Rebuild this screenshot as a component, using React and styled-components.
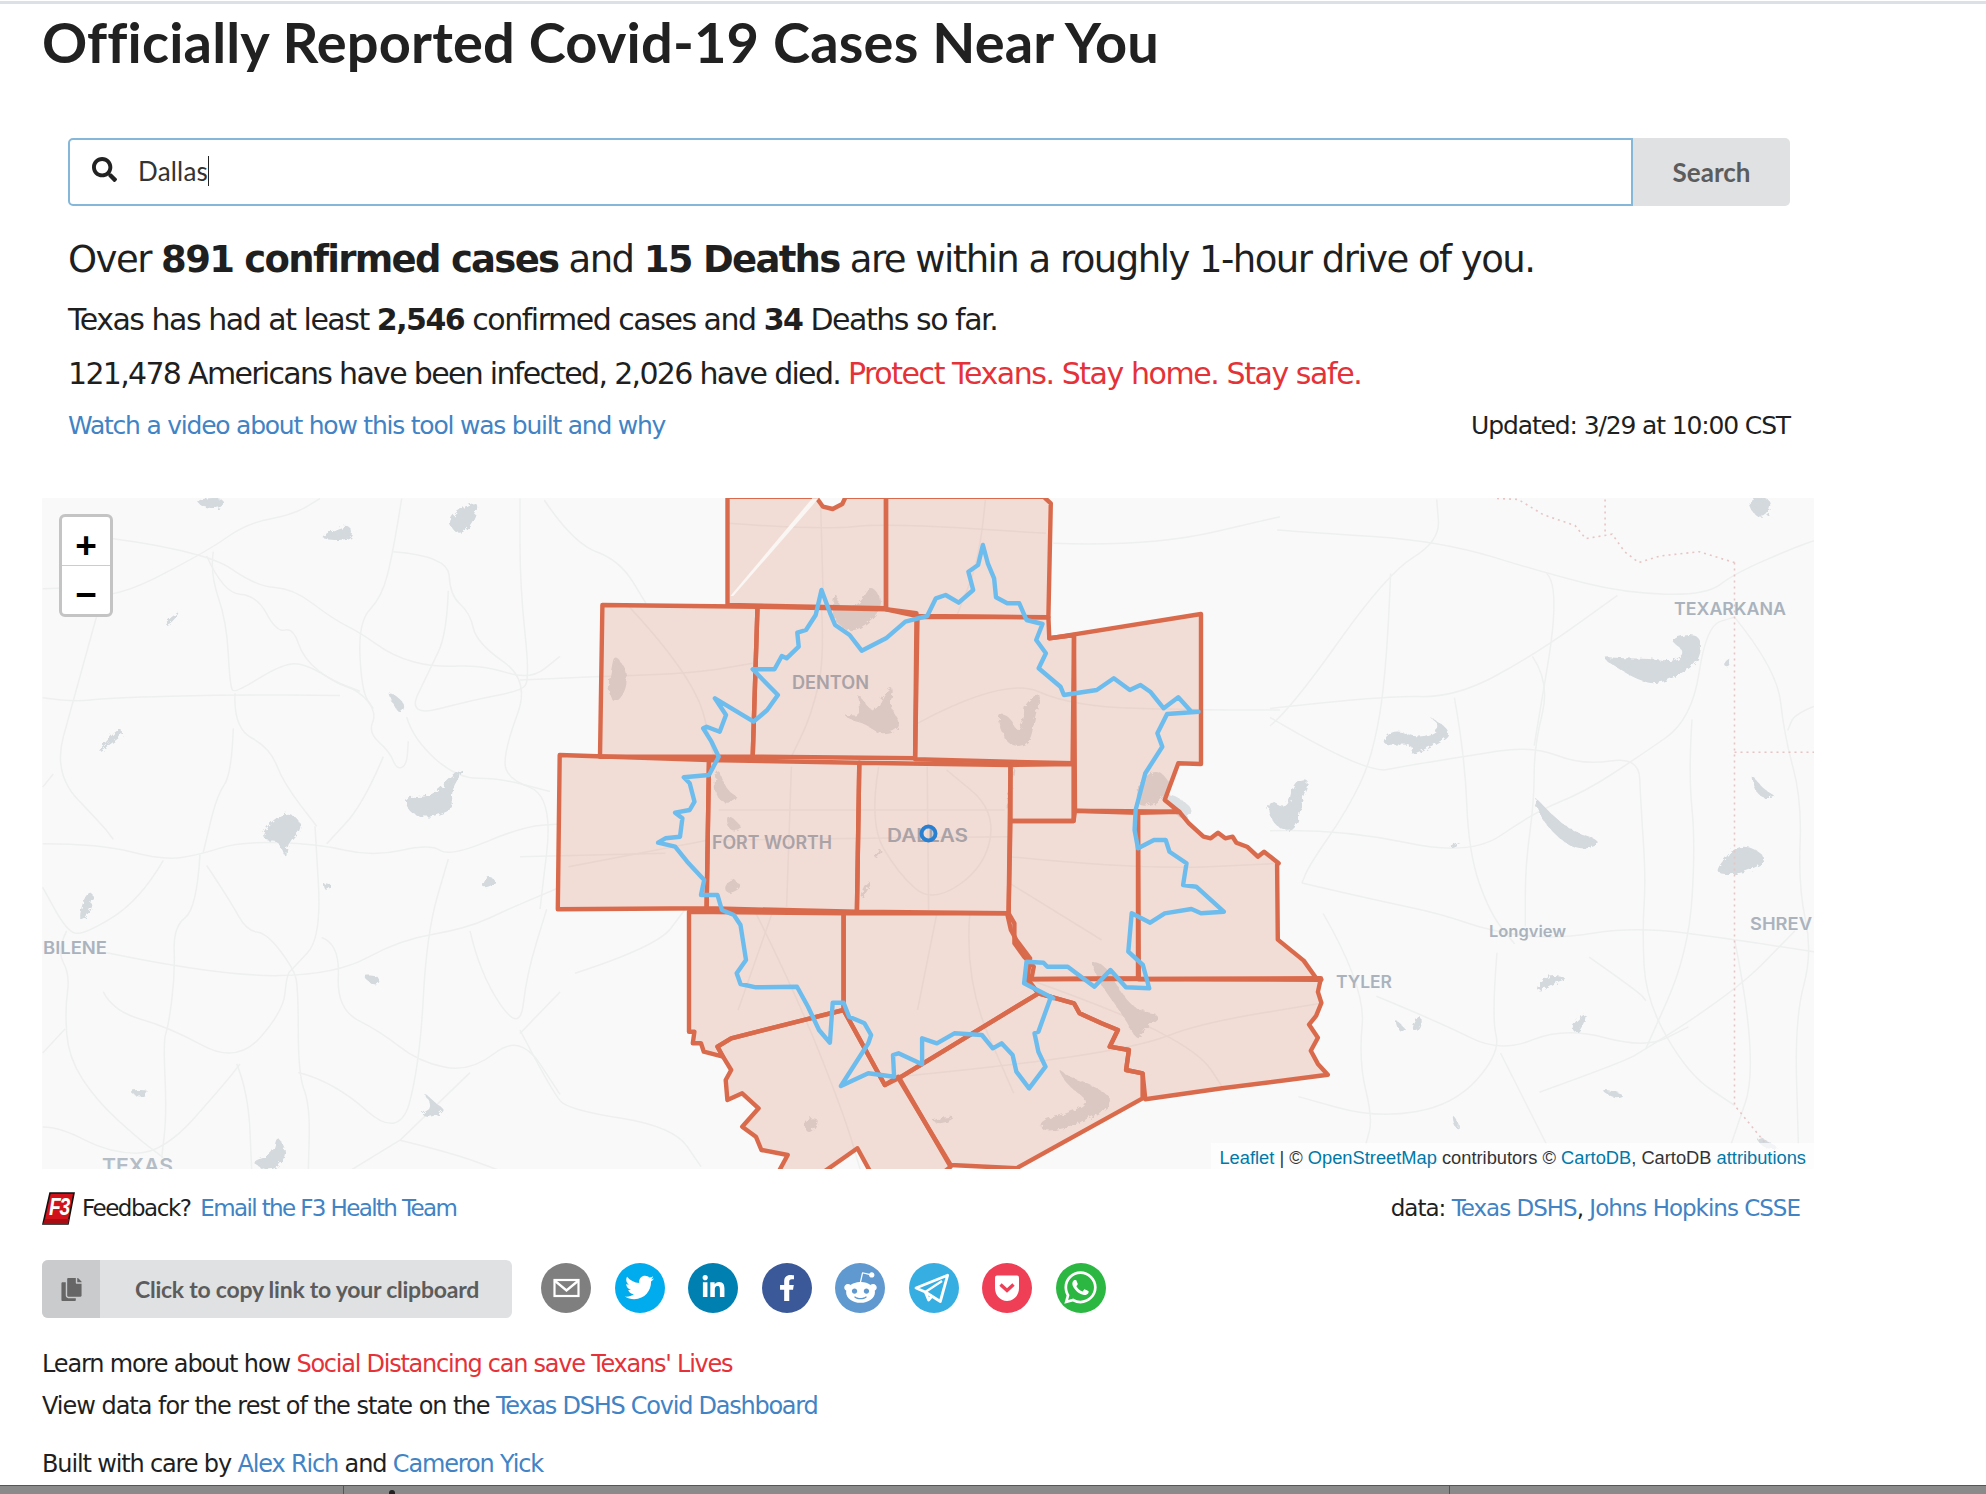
import React from 'react'
import styled, { createGlobalStyle } from 'styled-components'
import {
  FaSearch,
  FaCopy,
  FaTwitter,
  FaLinkedinIn,
  FaFacebookF,
  FaRedditAlien,
  FaWhatsapp,
} from 'react-icons/fa'

const BODY_FONT = '"DejaVu Sans", Verdana, sans-serif'
const UI_FONT = 'Lato, "Noto Sans", sans-serif'

const GlobalStyle = createGlobalStyle`
  html, body {
    margin: 0;
    background: #fff;
  }
  body {
    color: #1f1f1f;
    font-family: ${BODY_FONT};
    overflow: hidden;
  }
  a {
    color: #4183c4;
    text-decoration: none;
  }
`

const Page = styled.div`
  width: 1986px;
  height: 1494px;
  display: flex;
  flex-direction: column;
`

const TopLine = styled.div`
  height: 3px;
  margin-top: 1px;
  background: #dbe1e7;
`

const Title = styled.h1`
  margin: 4px 0 0 42px;
  font: 700 56px/67px ${UI_FONT};
  letter-spacing: 0.17px;
  color: #212121;
`

const Summary = styled.section`
  margin: 63px 196px 0 68px;
`

const SearchRow = styled.div`
  display: flex;
  height: 68px;
`

const SearchBox = styled.div`
  flex: 1;
  display: flex;
  align-items: center;
  gap: 21px;
  padding-left: 22px;
  border: 2px solid #85b7d9;
  border-radius: 5px 0 0 5px;
  font: 400 26px ${UI_FONT};
  color: #333;
  svg {
    font-size: 25px;
    color: #222;
    margin-top: -4px;
  }
`

const Typed = styled.span`
  margin-top: -2px;
  line-height: 30px;
  border-right: 1px solid #222;
  letter-spacing: 0.2px;
`

const SearchButton = styled.button`
  width: 157px;
  border: 0;
  border-radius: 0 5px 5px 0;
  background: #e0e1e2;
  color: #5c5c5c;
  font: 700 26px ${UI_FONT};
`

const Headline = styled.p`
  margin: 31px 0 0;
  font-size: 37px;
  line-height: 46px;
  letter-spacing: -1.53px;
  b {
    font-weight: 700;
    letter-spacing: -1.72px;
  }
`

const Alert = styled.span`
  color: #e53238;
`

const Stat = styled.p`
  margin: ${(p) => p.$top}px 0 0;
  font-size: 30px;
  line-height: 40px;
  letter-spacing: ${(p) => p.$track}px;
  ${Alert} {
    letter-spacing: -1.43px;
  }
`

const MetaRow = styled.div`
  display: flex;
  justify-content: space-between;
  margin-top: 14px;
  font-size: 25px;
  line-height: 36px;
  letter-spacing: -1.14px;
  a {
    letter-spacing: -1.23px;
  }
`

const MapFrame = styled.div`
  position: relative;
  width: 1772px;
  height: 673px;
  margin: 54px 0 0 42px;
  background: #f9f9f9;
  overflow: hidden;
  svg {
    display: block;
  }
`

const ZoomControl = styled.div`
  position: absolute;
  top: 16px;
  left: 17px;
  width: 48px;
  border: 3px solid #c4c4c4;
  border-radius: 6px;
  background: #fff;
`

const ZoomButton = styled.div`
  height: 38px;
  padding-top: 10px;
  display: flex;
  align-items: center;
  justify-content: center;
  font: 700 37px/38px "Liberation Sans", sans-serif;
  color: #000;
  & + & {
    border-top: 1px solid #ccc;
  }
`

const Attribution = styled.div`
  position: absolute;
  right: 0;
  bottom: 0;
  height: 26px;
  padding: 0 8px;
  background: rgba(255, 255, 255, 0.7);
  font: 400 18.3px/29px "Liberation Sans", sans-serif;
  color: #333;
  a {
    color: #0078a8;
  }
`

const CreditRow = styled.div`
  display: flex;
  align-items: center;
  justify-content: space-between;
  width: 1758px;
  height: 36px;
  margin: 21px 0 0 42px;
  font-size: 23px;
  letter-spacing: -1px;
`

const Feedback = styled.div`
  display: flex;
  align-items: center;
  gap: 7px;
  letter-spacing: -1.47px;
  a {
    margin-left: 4px;
    letter-spacing: -1.63px;
  }
`

const ShareRow = styled.div`
  display: flex;
  align-items: center;
  height: 58px;
  margin: 34px 0 0 42px;
`

const CopyButton = styled.button`
  display: flex;
  align-items: stretch;
  width: 470px;
  height: 58px;
  padding: 0;
  margin-right: 29px;
  border: 0;
  border-radius: 6px;
  overflow: hidden;
  background: #e0e1e2;
  color: #5c5c5c;
  font: 700 23px ${UI_FONT};
  letter-spacing: -0.24px;
`

const CopyIcon = styled.span`
  width: 58px;
  display: flex;
  align-items: center;
  justify-content: center;
  background: #cacbcd;
  font-size: 23px;
  color: #666;
`

const CopyLabel = styled.span`
  flex: 1;
  align-self: center;
  text-align: center;
  padding-left: 2px;
`

const ShareList = styled.div`
  display: flex;
  gap: 23.5px;
  margin-bottom: 3px;
`

const ShareCircle = styled.a`
  width: 50px;
  height: 50px;
  border-radius: 50%;
  display: flex;
  align-items: center;
  justify-content: center;
  background: ${(p) => p.$bg};
  color: #fff;
  font-size: ${(p) => p.$size || 26}px;
`

const FootLine = styled.p`
  margin: ${(p) => p.$top}px 0 0 42px;
  font-size: 24px;
  line-height: 32px;
  letter-spacing: ${(p) => p.$track || -1.15}px;
  ${Alert} {
    letter-spacing: -1.24px;
  }
`

const DashLink = styled.a`
  letter-spacing: -1.25px;
`

const BottomBar = styled.div`
  position: relative;
  display: flex;
  height: 8px;
  margin-top: 5px;
  border-top: 1px solid #555;
  background: #8a8a8a;
`

const BarPane = styled.div`
  width: ${(p) => p.$w}px;
  border-right: 1px solid #555;
`

const BarMark = styled.span`
  position: absolute;
  left: 389px;
  top: 4px;
  width: 6px;
  height: 4px;
  border-radius: 3px 3px 0 0;
  background: #222;
`

// crop window -> page coordinates, traced points are kept as read off the crops
const CENTER = [520, 490, 2.063, 3]
const SOUTH = [520, 880, 1.823, 3]
const WEST = [40, 495, 3, 2.294]
const EAST = [1270, 495, 2.82, 2.294]

const toPage = (view, s) =>
  s
    .trim()
    .split(/\s+/)
    .map((pair) => {
      const [x, y] = pair.split(',').map(Number)
      return [view[0] + x / view[2], view[1] + y / view[3]]
    })

const place = (view, s) =>
  toPage(view, s)
    .map(([x, y]) => `${x.toFixed(1)},${y.toFixed(1)}`)
    .join(' ')

// rounds a traced line off so roads and lakes don't look like straight segments
const curve = (view, s, closed) => {
  const p = toPage(view, s)
  const mid = (a, b) => [(a[0] + b[0]) / 2, (a[1] + b[1]) / 2]
  const n = p.length
  if (closed) {
    const start = mid(p[n - 1], p[0])
    let d = `M${start[0].toFixed(1)} ${start[1].toFixed(1)}`
    p.forEach((pt, i) => {
      const m = mid(pt, p[(i + 1) % n])
      d += `Q${pt[0].toFixed(1)} ${pt[1].toFixed(1)} ${m[0].toFixed(1)} ${m[1].toFixed(1)}`
    })
    return `${d}Z`
  }
  let d = `M${p[0][0].toFixed(1)} ${p[0][1].toFixed(1)}`
  for (let i = 1; i < n - 1; i++) {
    const m = mid(p[i], p[i + 1])
    d += `Q${p[i][0].toFixed(1)} ${p[i][1].toFixed(1)} ${m[0].toFixed(1)} ${m[1].toFixed(1)}`
  }
  return `${d}L${p[n - 1][0].toFixed(1)} ${p[n - 1][1].toFixed(1)}`
}

const ROADS = [
  [WEST, '8,215 100,210 220,240 500,130 620,65 760,45 840,8'],
  [WEST, '215,100 500,130 650,210 760,215 880,285 960,315 1060,370 1180,395 1330,390 1470,425 1560,370'],
  [WEST, '520,130 510,180 560,290 570,440 585,455 720,390 790,385 890,430 960,450'],
  [WEST, '8,465 100,475 200,465 585,458 900,460'],
  [WEST, '585,455 580,535 690,580 730,660 830,760'],
  [WEST, '580,535 575,640 530,690 490,820'],
  [WEST, '8,800 180,800 370,838 480,825 600,795 830,800 1000,830 1170,800 1230,830 1450,760 1560,755'],
  [WEST, '180,250 100,470 40,640 190,760 220,790'],
  [WEST, '40,640 8,670'],
  [WEST, '370,838 300,930 130,1010 80,1000 8,900'],
  [WEST, '80,1000 50,1045 90,1100 75,1180 85,1290 170,1390 300,1480 370,1520'],
  [WEST, '200,1050 550,1105 890,1100 1080,1020 1280,995 1420,945 1560,900'],
  [WEST, '480,825 470,950 400,990 405,1100 385,1220 370,1250 380,1420 365,1520'],
  [WEST, '190,1140 220,1185 385,1220 590,1305 730,1185 740,1100 760,1085 845,1015 825,760'],
  [WEST, '500,850 570,930 620,1000 680,1005 760,1085 775,1130 775,1330 810,1400 805,1550'],
  [WEST, '590,1305 625,1370 635,1550'],
  [WEST, '775,1325 880,1345 1080,1480 1140,1300 1160,1005 1225,835'],
  [WEST, '8,1280 75,1225'],
  [WEST, '8,1450 60,1450 210,1510 370,1510 560,1345 600,1305'],
  [WEST, '845,1015 900,1030 890,1180 1020,1230 1135,1300 1290,1325 1440,1235 1560,1375'],
  [WEST, '1440,1235 1560,1140'],
  [WEST, '1290,1000 1320,1100 1440,1235 1460,1100 1520,950'],
  [WEST, '1080,1480 1290,1325'],
  [WEST, '1080,1480 1240,1510 1380,1550'],
  [WEST, '1080,1480 930,1550'],
  [WEST, '1060,130 1225,140 1230,230 1290,270 1310,340 1470,425 1395,580 1395,650 1540,690 1500,950'],
  [WEST, '1085,8 1060,130 1025,235 955,290 965,450 1000,490'],
  [WEST, '1225,220 1220,320 1170,400 1100,510 1300,470 1440,450 1470,425 1440,210 1440,8'],
  [WEST, '1100,510 1120,560 1250,650 1380,650 1530,680'],
  [WEST, '1030,600 970,710 860,800'],
  [WEST, '500,140 550,225 650,230 710,315 760,305 790,375 880,430 960,450 1010,500 985,545 1050,590 1070,630 1100,620 1105,565'],
  [EAST, '20,80 100,85 480,105 780,180 1000,225 1230,230 1310,180 1480,120 1551,100'],
  [EAST, '0,490 320,460 520,465 740,370 980,230'],
  [EAST, '0,530 60,490 330,180 480,105 470,10'],
  [EAST, '340,180 330,400 290,600 220,720 110,850 90,890'],
  [EAST, '520,465 550,600 560,820 620,960 690,1030'],
  [EAST, '0,770 200,765 565,830 740,730 890,680 1040,600 1190,515 1230,300 1310,280'],
  [EAST, '0,510 270,640 390,620 550,600 740,575 880,620 1040,600 1045,700 1060,880 1050,1000 1060,1160 1180,1330 1310,1400'],
  [EAST, '740,370 790,430 745,575 745,700 720,850 720,990'],
  [EAST, '90,890 300,930 480,960 620,1000 800,1020 1030,990 1310,1020 1551,1050'],
  [EAST, '150,960 270,1130 250,1300 290,1430 270,1490'],
  [EAST, '300,1150 480,1210 650,1280 830,1220 1060,1270 1180,1220'],
  [EAST, '650,1280 780,1490'],
  [EAST, '640,1050 625,1200 650,1280 520,1400 300,1430 80,1380'],
  [EAST, '780,180 820,210 745,575'],
  [EAST, '1190,515 1180,640 1200,800 1180,1050 1060,1270'],
  [EAST, '1310,280 1430,400 1450,550 1500,700 1490,900 1530,1050 1480,1200 1490,1490'],
  [EAST, '1551,480 1480,500 1460,540'],
  [EAST, '1060,1270 1300,1150 1480,1000'],
  [EAST, '900,1060 1040,1140 1060,1160'],
  [EAST, '1310,1020 1380,1300 1300,1490'],
  [EAST, '760,1370 1000,1300 1060,1270'],
  [CENTER, '50,30 110,160 205,210 260,340'],
  [CENTER, '225,350 360,560 400,800'],
  [CENTER, '0,570 150,560 360,550 480,520'],
  [CENTER, '620,300 630,500 600,680 560,800'],
  [CENTER, '430,100 620,120 755,100 1085,130'],
  [CENTER, '620,30 625,300'],
  [CENTER, '960,30 950,200 900,380'],
  [CENTER, '820,700 1000,560 1140,650 1400,660 1568,660'],
  [CENTER, '1100,160 1300,170 1568,80'],
  [CENTER, '410,960 660,960 1000,960'],
  [CENTER, '410,1050 700,1045 1010,1040'],
  [CENTER, '840,830 843,1260'],
  [CENTER, '560,830 550,1250'],
  [CENTER, '740,830 720,1000 780,1150 850,1240 960,1130 980,960 880,840'],
  [CENTER, '100,1130 390,1050'],
  [CENTER, '0,1100 300,1090'],
  [CENTER, '1010,1100 1275,1140 1568,1120'],
  [CENTER, '1010,1180 1200,1350'],
  [CENTER, '860,1270 820,1560'],
  [CENTER, '520,1270 450,1560'],
  [SOUTH, '0,450 60,640 90,690 280,740 330,860'],
  [SOUTH, '100,280 250,200 300,90'],
  [SOUTH, '430,100 500,330 590,700 620,868'],
  [SOUTH, '690,590 880,560 1130,500 1240,430 1460,370'],
  [SOUTH, '820,100 810,300 900,640'],
  [SOUTH, '930,300 1100,400 1240,520 1280,620'],
]

const LAKES = [
  [WEST, '465,10 550,5 550,30 490,30'],
  [WEST, '835,95 930,65 940,100 870,105'],
  [WEST, '1215,55 1320,5 1300,65 1255,95'],
  [WEST, '365,300 425,260 395,295'],
  [WEST, '165,595 240,530 250,550 205,575'],
  [WEST, '1040,445 1100,480 1080,505 1055,475'],
  [WEST, '665,770 740,720 795,760 740,800 740,840 715,790 675,795'],
  [WEST, '115,975 135,915 165,910 140,975'],
  [WEST, '1080,690 1170,695 1230,650 1280,620 1230,680 1245,725 1125,745'],
  [WEST, '1320,905 1345,870 1375,890'],
  [WEST, '845,885 880,895 855,910'],
  [WEST, '960,1100 1025,1105 1010,1130'],
  [WEST, '1145,1365 1195,1400 1215,1410 1170,1430 1140,1420 1180,1405'],
  [WEST, '625,1530 700,1515 710,1465 745,1510 700,1555'],
  [WEST, '260,1365 335,1365 300,1385'],
  [EAST, '930,370 1000,375 1070,375 1130,385 1175,360 1120,330 1215,315 1215,380 1150,415 1090,435 1040,425 985,400'],
  [EAST, '1345,5 1415,5 1405,50 1365,50'],
  [EAST, '305,575 350,535 420,560 490,535 435,500 520,545 460,575 390,600 410,570'],
  [EAST, '-5,695 50,725 65,655 115,650 90,695 75,770 30,770 -5,735'],
  [EAST, '740,685 790,730 850,770 940,795 890,815 830,800 765,745'],
  [EAST, '1260,855 1325,795 1415,835 1330,870 1265,870'],
  [EAST, '1355,635 1390,675 1435,695 1375,695'],
  [EAST, '845,1220 900,1180 870,1240'],
  [EAST, '745,1145 780,1100 845,1108 800,1120'],
  [EAST, '350,1200 385,1225 365,1235'],
  [EAST, '395,1230 425,1185 425,1225'],
  [EAST, '925,1360 1005,1375 970,1385'],
  [EAST, '512,1415 538,1450 522,1455'],
  [EAST, '1365,1465 1445,1500 1390,1500'],
  [EAST, '1275,390 1300,370 1295,395'],
  [EAST, '500,808 538,792 520,808'],
  [CENTER, '695,600 715,650 735,665 755,600 772,590 762,650 778,680 785,718 740,735 715,702 680,690 668,672 705,680'],
  [CENTER, '650,295 662,365 700,345 725,282 752,340 720,400 680,430 642,385'],
  [CENTER, '195,490 220,540 220,600 195,645 180,600 188,540'],
  [CENTER, '1078,600 1062,680 1052,765 1010,770 992,720 985,670 1010,678 1025,728 1040,690 1040,640'],
  [CENTER, '1025,800 1005,960 1020,995 1000,960 1012,860'],
  [CENTER, '1312,835 1345,880 1325,935 1270,955 1275,880'],
  [CENTER, '1340,905 1395,960 1365,995 1328,930'],
  [CENTER, '408,825 425,900 455,925 420,945 398,900'],
  [CENTER, '440,1165 460,1190 430,1215 420,1190'],
  [CENTER, '730,1170 700,1240 712,1185'],
  [CENTER, '425,965 465,1020 430,1025'],
  [CENTER, '750,1075 735,1110 730,1090'],
  [SOUTH, '1040,240 1070,260 1092,330 1122,390 1172,405 1142,440 1125,485 1105,420 1070,340 1050,290'],
  [SOUTH, '978,560 1000,590 1050,620 1092,670 1000,745 950,755 948,720 1000,700 1040,665 1000,620'],
  [SOUTH, '745,720 800,705 770,735'],
  [SOUTH, '515,715 550,715 525,770'],
]

const STATE_LINES = [
  '640,8 700,10 770,45 860,70 890,100 965,90 1000,130 1040,155 1100,140 1210,130 1310,155',
  '945,10 945,90',
  '1310,155 1310,1400 1400,1490',
  '1310,590 1551,590',
]

const COUNTIES = [
  place(CENTER, '428,20 428,345 755,355 755,20 672,20 665,42 645,57 625,50 610,20'),
  place(CENTER, '755,20 1080,20 1095,40 1090,382 820,378 755,358'),
  place(CENTER, '170,345 490,350 480,800 165,800'),
  place(CENTER, '490,350 755,358 818,370 815,805 480,800'),
  place(CENTER, '820,380 1090,382 1092,445 1143,435 1140,820 815,808'),
  place(CENTER, '1092,445 1405,372 1405,822 1358,820 1330,930 1360,965 1145,962 1143,435'),
  place(CENTER, '1012,825 1142,822 1142,993 1012,993'),
  place(CENTER, '82,795 390,810 385,1255 78,1258'),
  place(CENTER, '390,810 700,818 695,1265 385,1255'),
  place(CENTER, '700,818 1012,825 1008,1270 695,1265'),
  place(CENTER, '1012,993 1142,993 1145,962 1275,968 1275,1465 1055,1467 1060,1430 1040,1400 1020,1360 1020,1300 1008,1270'),
  `${place(CENTER, '1275,968 1360,965 1380,1000 1410,1040 1425,1045 1440,1028 1455,1045 1470,1040 1478,1058 1500,1070 1522,1100 1535,1085 1565,1120')} ${place(EAST, '20,848 22,1020 95,1068 130,1108 145,1112')} ${place(SOUTH, '1128,298')}`,
  place(SOUTH, '308,95 590,100 590,390 385,475 360,500 370,530 335,515 330,490 315,490 318,455 308,455'),
  place(SOUTH, '590,100 888,100 895,150 905,180 930,235 925,298 945,340 690,595 665,615 590,390'),
  place(SOUTH, '385,475 590,390 665,615 690,590 785,860 770,880 640,880 615,805 550,880 470,880 488,825 440,810 430,770 405,740 435,685 405,640 378,660 375,600 385,570 370,530 360,500'),
  place(SOUTH, '690,595 945,340 1010,370 1020,400 1060,430 1090,450 1075,500 1110,510 1105,570 1135,580 1135,655 905,865 785,855'),
  `${place(SOUTH, '925,298 1460,295')} ${place(EAST, '135,1140 145,1165 130,1195 110,1215 135,1245 115,1275 135,1305 163,1330')} ${place(SOUTH, '1280,625 1140,658 1135,580 1105,570 1110,510 1075,500 1090,450 1060,430 1020,400 1010,370 945,340')}`,
]

const REACH = [
  place(CENTER, '622,300 640,370 650,405 680,435 705,482 755,445 795,395 840,378 858,325 878,315 905,338 935,300 925,245 945,225 955,165 965,220 978,265 982,322 1005,340 1030,340 1045,390 1078,402 1065,450 1085,490 1070,535 1115,590 1122,615 1190,600 1225,565 1258,600 1280,585 1300,605 1328,655 1358,622 1385,665 1400,665 1335,672 1315,730 1325,770 1290,850 1270,960 1268,1020 1275,1075 1308,1050 1332,1050 1340,1085 1375,1120 1368,1185 1395,1190 1452,1265 1405,1270 1385,1257 1330,1270 1300,1298 1262,1270 1255,1385 1285,1425 1298,1495 1250,1492 1218,1440 1185,1490 1130,1430 1088,1430 1080,1418 1045,1415 1040,1480 1100,1525'),
  place(SOUTH, '968,350 945,455 938,460 945,515 958,560 928,625 905,575 898,525 878,490 862,505 842,465 792,460 760,490 733,475 733,553 690,520 680,525 682,590 635,580 585,618 635,490 640,465 628,430 600,410 590,368 570,368 565,488 545,450 525,380 505,320 430,322 402,312 395,280 412,240 402,135 390,105 368,90 360,45 330,45'),
  place(CENTER, '380,1170 345,1115 320,1070 285,1058 300,1045 330,1040 335,985 320,968 350,960 360,935 350,880 338,862 390,855 410,800 395,755 378,715 385,710 412,725 425,675 402,625 482,695 510,660 532,615 480,538 525,538 540,498 550,505 575,470 572,428 590,420 610,375'),
].join(' ')

const LABELS = [
  { text: 'DENTON', x: 792, y: 689, w: 77, size: 18, fill: '#a9a2a6' },
  { text: 'FORT WORTH', x: 712, y: 849, w: 120, size: 18, fill: '#a9a2a6' },
  { text: 'DALLAS', x: 887, y: 842, w: 81, size: 18, fill: '#a9a2a6' },
  { text: 'TEXARKANA', x: 1674, y: 615, w: 112, size: 17, fill: '#aab3bd' },
  { text: 'TYLER', x: 1336, y: 988, w: 56, size: 17, fill: '#aab3bd' },
  { text: 'Longview', x: 1489, y: 937, w: 77, size: 16, fill: '#aab3bd' },
  { text: 'SHREV', x: 1750, y: 930, w: 62, size: 17, fill: '#aab3bd' },
  { text: 'BILENE', x: 43, y: 954, w: 64, size: 17, fill: '#aab3bd' },
  { text: 'TEXAS', x: 102, y: 1173, w: 71, size: 20, fill: '#b4bcc5' },
]

const lakeFill = (view) => (view === CENTER || view === SOUTH ? '#dde0e2' : '#d3d9dc')

const MapDrawing = () => (
  <svg width="1772" height="673" viewBox="42 498 1772 673">
    <defs>
      <filter id="shore" x="-20%" y="-20%" width="140%" height="140%">
        <feTurbulence type="fractalNoise" baseFrequency="0.22" numOctaves="2" seed="4" />
        <feDisplacementMap in="SourceGraphic" scale="6" />
      </filter>
    </defs>
    {ROADS.map(([view, pts], i) => (
      <path key={i} d={curve(view, pts)} fill="none" stroke="#eeefef" strokeWidth="1.5" />
    ))}
    <g filter="url(#shore)">
      {LAKES.map(([view, pts], i) => (
        <path key={i} d={curve(view, pts, true)} fill={lakeFill(view)} />
      ))}
    </g>
    {STATE_LINES.map((pts, i) => (
      <polyline key={i} points={place(EAST, pts)} fill="none" stroke="#e8c4c4" strokeWidth="1.6" strokeDasharray="2 4" />
    ))}
    {COUNTIES.map((pts, i) => (
      <polygon key={i} points={pts} fill="#d96b4c" fillOpacity="0.2" stroke="#d96b4c" strokeWidth="4.4" strokeLinejoin="round" />
    ))}
    <polygon points={place(CENTER, '603,25 616,25 440,318 434,318')} fill="#faf6f3" />
    {LABELS.map((l) => (
      <text
        key={l.text}
        x={l.x}
        y={l.y}
        textLength={l.w}
        lengthAdjust="spacingAndGlyphs"
        fill={l.fill}
        fontFamily="Inter, sans-serif"
        fontWeight="600"
        fontSize={l.size}
      >
        {l.text}
      </text>
    ))}
    <polygon points={REACH} fill="none" stroke="#6cbcee" strokeWidth="4.4" strokeLinejoin="round" />
    <circle cx="928.5" cy="833.5" r="7" fill="none" stroke="#2a80d0" strokeWidth="4" />
  </svg>
)

const F3Logo = () => (
  <svg width="33" height="33" viewBox="0 0 33 33">
    <polygon points="8,1 32,1 26,32 1,32" fill="#d1121b" stroke="#111" strokeWidth="1.6" />
    <polygon points="3,27 27,27 26,32 1,32" fill="#a80d14" />
    <text
      x="7"
      y="23"
      textLength="20"
      lengthAdjust="spacingAndGlyphs"
      fontFamily="Liberation Sans, sans-serif"
      fontWeight="700"
      fontStyle="italic"
      fontSize="23"
      fill="#fff"
    >
      F3
    </text>
  </svg>
)

const MailIcon = () => (
  <svg width="50" height="50" viewBox="0 0 50 50">
    <rect x="13.5" y="17" width="24" height="16" fill="none" stroke="#fff" strokeWidth="2.2" />
    <polyline points="13.5,17.5 25.5,27.5 37.5,17.5" fill="none" stroke="#fff" strokeWidth="2.4" />
  </svg>
)

const TelegramIcon = () => (
  <svg width="50" height="50" viewBox="0 0 50 50">
    <polygon points="7,25 38.6,12.3 31.3,38.5 16.3,29" fill="none" stroke="#fff" strokeWidth="2.8" strokeLinejoin="round" />
    <polyline points="16.3,29 19.6,37 23.5,32.5" fill="none" stroke="#fff" strokeWidth="2.8" strokeLinejoin="round" />
    <line x1="16.3" y1="29" x2="33" y2="18" stroke="#fff" strokeWidth="2.2" />
  </svg>
)

const PocketIcon = () => (
  <svg width="50" height="50" viewBox="0 0 50 50">
    <path d="M13 14.5a2 2 0 0 1 2-2h20a2 2 0 0 1 2 2V25c0 7.500-5.500 13-12 13s-12-5.500-12-13z" fill="#fff" />
    <polyline points="18.500,21.500 25,27.500 31.500,21.500" fill="none" stroke="#ef3f56" strokeWidth="3.4" />
  </svg>
)

const App = () => (
  <Page>
    <GlobalStyle />
    <TopLine />
    <Title>Officially Reported Covid-19 Cases Near You</Title>

    <Summary>
      <SearchRow>
        <SearchBox>
          <FaSearch />
          <Typed>Dallas</Typed>
        </SearchBox>
        <SearchButton>Search</SearchButton>
      </SearchRow>
      <Headline>
        Over <b>891 confirmed cases</b> and <b>15 Deaths</b> are within a roughly 1-hour drive of you.
      </Headline>
      <Stat $top={17} $track={-1.48}>
        Texas has had at least <b>2,546</b> confirmed cases and <b>34</b> Deaths so far.
      </Stat>
      <Stat $top={14} $track={-1.69}>
        121,478 Americans have been infected, 2,026 have died. <Alert>Protect Texans. Stay home. Stay safe.</Alert>
      </Stat>
      <MetaRow>
        <a href="#video">Watch a video about how this tool was built and why</a>
        <span>Updated: 3/29 at 10:00 CST</span>
      </MetaRow>
    </Summary>

    <MapFrame>
      <MapDrawing />
      <ZoomControl>
        <ZoomButton>+</ZoomButton>
        <ZoomButton>−</ZoomButton>
      </ZoomControl>
      <Attribution>
        <a href="#leaflet">Leaflet</a> | © <a href="#osm">OpenStreetMap</a> contributors © <a href="#carto">CartoDB</a>, CartoDB <a href="#attr">attributions</a>
      </Attribution>
    </MapFrame>

    <CreditRow>
      <Feedback>
        <F3Logo />
        <span>
          Feedback? <a href="#mail">Email the F3 Health Team</a>
        </span>
      </Feedback>
      <span>
        data: <a href="#dshs">Texas DSHS</a>, <a href="#jhu">Johns Hopkins CSSE</a>
      </span>
    </CreditRow>

    <ShareRow>
      <CopyButton>
        <CopyIcon>
          <FaCopy />
        </CopyIcon>
        <CopyLabel>Click to copy link to your clipboard</CopyLabel>
      </CopyButton>
      <ShareList>
        <ShareCircle $bg="#7f7f7f"><MailIcon /></ShareCircle>
        <ShareCircle $bg="#00aced" $size={29}><FaTwitter /></ShareCircle>
        <ShareCircle $bg="#007fb1" $size={25}><FaLinkedinIn /></ShareCircle>
        <ShareCircle $bg="#3b5998" $size={26}><FaFacebookF /></ShareCircle>
        <ShareCircle $bg="#5f99cf" $size={35}><FaRedditAlien /></ShareCircle>
        <ShareCircle $bg="#37aee2"><TelegramIcon /></ShareCircle>
        <ShareCircle $bg="#ef3f56"><PocketIcon /></ShareCircle>
        <ShareCircle $bg="#2cb742" $size={37}><FaWhatsapp /></ShareCircle>
      </ShareList>
    </ShareRow>

    <FootLine $top={30}>
      Learn more about how <Alert>Social Distancing can save Texans' Lives</Alert>
    </FootLine>
    <FootLine $top={10} $track={-1.03}>
      View data for the rest of the state on the <DashLink href="#dash">Texas DSHS Covid Dashboard</DashLink>
    </FootLine>
    <FootLine $top={26}>
      Built with care by <a href="#alex">Alex Rich</a> and <a href="#cameron">Cameron Yick</a>
    </FootLine>

    <BottomBar>
      <BarPane $w={343} />
      <BarPane $w={1105} />
      <BarMark />
    </BottomBar>
  </Page>
)

export default App
